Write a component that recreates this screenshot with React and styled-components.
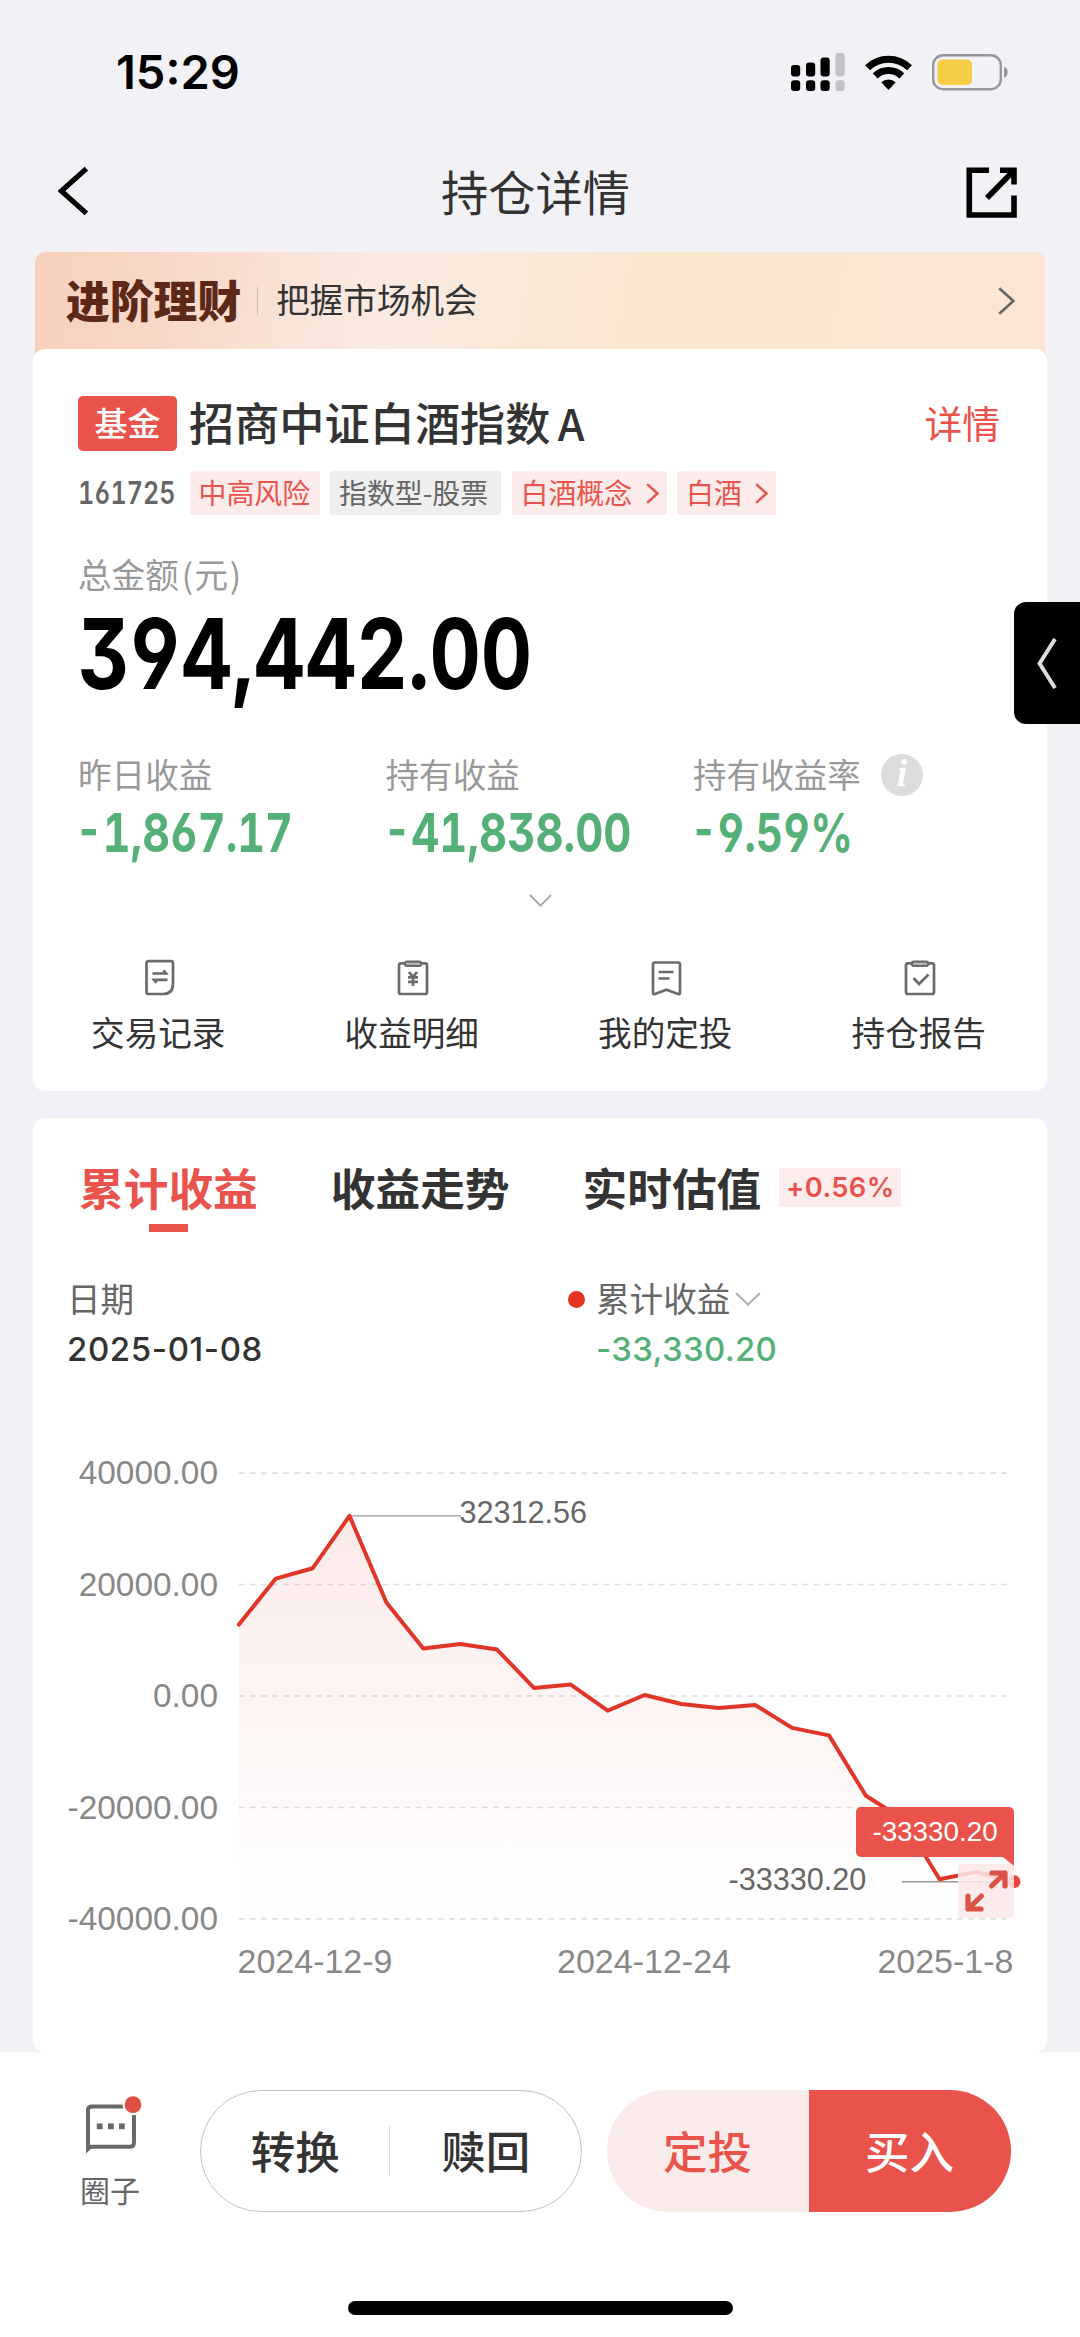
import React from "react";
import styled, { createGlobalStyle } from "styled-components";

const RED = "#e9534c";
const GREEN = "#55b078";
const CJK = `"Noto Sans CJK SC", "Noto Sans", sans-serif`;
const LATIN = `Inter, "Noto Sans CJK SC", sans-serif`;
const AXIS = `"Liberation Sans", "Noto Sans CJK SC", sans-serif`;

const GlobalStyle = createGlobalStyle`
  * { box-sizing: border-box; }
  body { margin: 0; background: #f2f1f6; font-family: ${CJK}; color: #333; }
  svg { display: block; flex: none; }
`;

const Screen = styled.div`
  position: relative;
  width: 1080px;
  height: 2337px;
  overflow: hidden;
  display: flex;
  flex-direction: column;
  white-space: nowrap;
`;

const StatusBar = styled.header`
  height: 144px;
  padding: 0 71px 0 116px;
  display: flex;
  align-items: center;
  justify-content: space-between;
`;

const Clock = styled.span`
  font: 600 47px/48px ${LATIN};
  color: #000;
`;

const StatusIcons = styled.div`
  display: flex;
  align-items: center;
  gap: 20px;
`;

const NavBar = styled.nav`
  height: 97px;
  margin-bottom: 11px;
  padding: 0 62px 0 58px;
  display: grid;
  grid-template-columns: 52px 1fr 52px;
  align-items: center;
`;

const BackLink = styled.a`
  padding-bottom: 3px;
`;

const NavTitle = styled.h1`
  margin: 0;
  padding: 0 5px 4px 0;
  text-align: center;
  font: 400 47.2px/60px ${CJK};
`;

const Banner = styled.section`
  height: 108px;
  margin: 0 34px -11px 35px;
  padding: 0 31px 11px;
  border-radius: 11px 11px 0 0;
  background: linear-gradient(100deg, #f7d0bc 0%, #f8d8c8 14%, #faeae2 34%, #fae8d8 48%, #fae5cf 60%, #fae6d3 100%);
  display: flex;
  align-items: center;
`;

const BannerBrand = styled.strong`
  padding-bottom: 4px;
  font: 900 43.8px/60px ${CJK};
  color: #5c2817;
`;

const BannerRule = styled.i`
  width: 1px;
  height: 28px;
  margin: 0 18px 0 16px;
  background: #d5b9aa;
`;

const BannerText = styled.span`
  flex: 1;
  padding-bottom: 3px;
  font: 400 33.6px/50px ${CJK};
`;

const Card = styled.section`
  position: relative;
  width: 1014px;
  height: ${(p) => p.$height}px;
  margin: 0 33px ${(p) => p.$gap || 0}px;
  border-radius: 12px;
  background: #fff;
`;

const FundHeader = styled.div`
  height: 102px;
  padding: 47px 47px 0 45px;
  display: flex;
  align-items: flex-start;
`;

const FundBadge = styled.span`
  width: 99px;
  height: 55px;
  margin-right: 12px;
  border-radius: 5px;
  background: ${RED};
  color: #fff;
  text-align: center;
  font: 500 33px/52px ${CJK};
`;

const FundName = styled.h2`
  flex: 1;
  margin: 0;
  font: 500 45.2px/51px ${CJK};
`;

const NameClass = styled.span`
  font-size: 43px;
  margin-left: -3px;
`;

const DetailLink = styled.a`
  font: 400 37.8px/51px ${CJK};
  color: ${RED};
`;

const TagRow = styled.div`
  height: 44px;
  margin: 20px 0 0 45px;
  display: flex;
  align-items: center;
  gap: 10.5px;
`;

const FundCode = styled.span`
  width: 101px;
  font: 600 31px/46px ${LATIN};
  font-feature-settings: "cv03", "cv04", "tnum";
  color: #666;
`;

const CodeText = styled.span`
  display: inline-block;
  transform: scaleX(0.81);
  transform-origin: left;
`;

const Tag = styled.span`
  width: ${(p) => p.$width}px;
  height: 44px;
  padding: 0 8px 0 9px;
  border-radius: 3px;
  display: flex;
  align-items: center;
  justify-content: space-between;
  background: ${(p) => (p.$muted ? "#eeeeee" : "#fbebea")};
  color: ${(p) => (p.$muted ? "#666" : RED)};
  font: 400 27.9px/44px ${CJK};
`;

const TagText = styled.span`
  height: 44px;
  line-height: 43px;
`;

const Caption = styled.div`
  height: 40px;
  margin: 40px 0 0 45px;
  color: #999;
  font: 400 33.6px/37px ${CJK};
`;

const Unit = styled.span`
  margin-left: 3px;
  letter-spacing: 1.5px;
`;

const Numeral = styled.div`
  height: ${(p) => p.$box}px;
  margin-left: ${(p) => p.$shift || 0}px;
  font: ${(p) => p.$weight} ${(p) => p.$size}px/${(p) => p.$box}px ${LATIN};
  font-feature-settings: "cv03", "cv04", "cv09", "tnum";
  color: ${(p) => p.$color};
  transform: scaleX(${(p) => p.$squeeze});
  transform-origin: left;
`;

const AmountRow = styled.div`
  margin: 14px 0 56px 45px;
`;

const Stats = styled.div`
  margin-left: 45px;
  display: grid;
  grid-template-columns: repeat(3, 307.5px);
`;

const StatLabel = styled.div`
  height: 42px;
  margin-bottom: 11px;
  display: flex;
  gap: 20px;
  color: #999;
  font: 400 33.6px/39px ${CJK};
`;

const InfoDot = styled.i`
  width: 42px;
  height: 42px;
  border-radius: 50%;
  background: #dcdcdc;
  color: #fff;
  text-align: center;
  font: italic 700 37px/40px "Liberation Serif", serif;
`;

const Expander = styled.div`
  height: 20px;
  margin: 31px 0 49px;
  display: flex;
  align-items: center;
  justify-content: center;
`;

const Actions = styled.div`
  display: grid;
  grid-template-columns: repeat(4, 1fr);
`;

const Action = styled.a`
  display: flex;
  flex-direction: column;
  align-items: center;
  gap: 16px;
  font: 400 33.6px/40px ${CJK};
`;

const ActionLabel = styled.span`
  padding-right: 3px;
`;

const Tabs = styled.div`
  height: 114px;
  padding: 45px 0 0 46px;
  display: flex;
  gap: 73px;
`;

const Tab = styled.div`
  display: flex;
  flex-direction: column;
  align-items: center;
  gap: 11px;
  color: ${(p) => (p.$active ? RED : "#333")};
  font: 700 44.7px/47px ${CJK};
`;

const TabBar = styled.i`
  width: 39px;
  height: 8px;
  background: ${RED};
`;

const TabLabel = styled.span`
  display: flex;
  height: 50px;
`;

const ChangeBadge = styled.span`
  width: 122px;
  height: 39px;
  margin: 5px 0 0 18px;
  background: #fdecec;
  text-align: center;
  color: ${RED};
  font: 600 27.3px/40px ${LATIN};
  letter-spacing: 0.4px;
`;

const Legend = styled.div`
  margin: 47px 0 81px 34px;
  display: grid;
  grid-template-columns: 501px 1fr;
`;

const LegendItem = styled.div`
  padding-left: ${(p) => (p.$dotted ? 28 : 0)}px;
  display: flex;
  flex-direction: column;
  gap: 10px;
`;

const LegendLabel = styled.div`
  height: 40px;
  margin-left: ${(p) => (p.$dotted ? -28 : 0)}px;
  display: flex;
  align-items: center;
  color: #666;
  font: 400 33.6px/40px ${CJK};
`;

const LegendText = styled.span`
  padding-bottom: 3px;
  margin-right: 5px;
`;

const SeriesDot = styled.i`
  width: 17px;
  height: 17px;
  margin-right: 11px;
  border-radius: 50%;
  background: #e63422;
`;

const LegendValue = styled.div`
  height: 40px;
  color: ${(p) => p.$color};
  font: 500 33px/40px ${LATIN};
  letter-spacing: ${(p) => p.$track}px;
`;

const ChartBox = styled.div`
  position: relative;
  width: 1014px;
  height: 540px;
`;

const Callout = styled.div`
  position: absolute;
  left: 823px;
  top: 357px;
  width: 158px;
  height: 50px;
  border-radius: 5px 5px 0 5px;
  background: ${RED};
  color: #fff;
  text-align: center;
  font: 400 27.8px/49px ${AXIS};
  &::after {
    content: "";
    position: absolute;
    right: 0;
    top: 50px;
    border-top: 9px solid ${RED};
    border-left: 11px solid transparent;
  }
`;

const ZoomButton = styled.button`
  position: absolute;
  left: 925px;
  top: 414px;
  width: 56px;
  height: 54px;
  padding: 0;
  border: 0;
  border-radius: 4px;
  background: rgba(250, 232, 231, 0.88);
`;

const Footer = styled.footer`
  height: 285px;
  padding: 38px 69px 0 78px;
  background: #fff;
  display: flex;
  align-items: flex-start;
`;

const Circle = styled.a`
  width: 64px;
  margin-right: 58px;
  display: flex;
  flex-direction: column;
  align-items: center;
  gap: 15px;
  color: #666;
  font: 400 30px/40px ${CJK};
`;

const ButtonGroup = styled.div`
  width: ${(p) => p.$width}px;
  height: 122px;
  margin-right: ${(p) => p.$gap || 0}px;
  border: ${(p) => (p.$outlined ? "1px solid #c4c4c4" : "0")};
  border-radius: 61px;
  overflow: hidden;
  display: flex;
  align-items: center;
`;

const FooterButton = styled.button`
  flex: 1;
  height: 100%;
  padding: 0 1px 3px 0;
  border: 0;
  background: ${(p) => p.$fill || "transparent"};
  color: ${(p) => p.$color || "#333"};
  font: 500 44.5px/60px ${CJK};
`;

const GroupRule = styled.i`
  width: 1px;
  height: 50px;
  margin: 0 2px 0 -2px;
  background: #d8d8d8;
`;

const HomeIndicator = styled.div`
  position: absolute;
  left: 348px;
  bottom: 22px;
  width: 385px;
  height: 14px;
  border-radius: 7px;
  background: #000;
`;

const SideTab = styled.div`
  position: absolute;
  right: 0;
  top: 602px;
  width: 66px;
  height: 122px;
  padding-left: 23px;
  border-radius: 12px 0 0 12px;
  background: #000;
  display: flex;
  align-items: center;
`;

function Chevron({ w, h, dir, color, stroke }) {
  const s = stroke / 2;
  const d = {
    left: `M${w - s} ${s} L${s * 1.3} ${h / 2} L${w - s} ${h - s}`,
    right: `M${s} ${s} L${w - s * 1.3} ${h / 2} L${s} ${h - s}`,
    down: `M${s} ${s} L${w / 2} ${h - s * 1.3} L${w - s} ${s}`,
  }[dir];
  return (
    <svg width={w} height={h} fill="none" stroke={color} strokeWidth={stroke}>
      <path d={d} />
    </svg>
  );
}

function SignalIcon() {
  const bars = [
    [0, 12, 11.5],
    [15, 9.5, 14],
    [29.5, 4.5, 19],
    [44.5, 0, 23.5],
  ];
  return (
    <svg width="54" height="38">
      {bars.map(([x, y, h], i) => (
        <g key={x} fill={i === 3 ? "#c3c2c7" : "#000"}>
          <rect x={x} y={y} width="9.2" height={h} rx="3" />
          <rect x={x} y="27.3" width="9.2" height="10.7" rx="3" />
        </g>
      ))}
    </svg>
  );
}

function WifiIcon() {
  return (
    <svg width="47" height="35" fill="none" stroke="#000" strokeWidth="7">
      <path d="M2.5 12.8 A30 30 0 0 1 44.5 12.8" />
      <path d="M10.2 21 A19 19 0 0 1 36.8 21" />
      <path d="M23.5 35 L16.3 27.3 A10.5 10.5 0 0 1 30.7 27.3 Z" fill="#000" stroke="none" />
    </svg>
  );
}

function BatteryIcon() {
  return (
    <svg width="77" height="37">
      <rect x="1.2" y="1.2" width="67.6" height="34" rx="10" fill="none" stroke="#97969b" strokeWidth="2.4" />
      <rect x="5.5" y="5.5" width="34.5" height="25.5" rx="5" fill="#f6ce46" />
      <path d="M72 12.5 C77 14.5 77 22 72 24 Z" fill="#97969b" />
    </svg>
  );
}

function ShareIcon() {
  return (
    <svg width="52" height="52" fill="none" stroke="#000" strokeWidth="5.6">
      <path d="M23 3.3 H3.3 V48 H48 V28.5" />
      <path d="M34 3.3 H48 V17.5" />
      <path d="M47 4.5 L21 31" />
    </svg>
  );
}

const iconProps = { width: 32, height: 37, fill: "none", stroke: "#6b6b6b", strokeWidth: 2.7 };

function RecordIcon() {
  return (
    <svg {...iconProps}>
      <path d="M4.5 2.2 H27 Q29 2.2 29 4.2 V25 Q29 35 19 35 H4.5 Q2.5 35 2.5 33 V4.2 Q2.5 2.2 4.5 2.2 Z" />
      <path d="M8.5 14.5 H22 L19.5 11.4" />
      <path d="M23.5 20.8 H10 L12.5 23.9" />
    </svg>
  );
}

function ClipboardIcon({ children }) {
  return (
    <svg {...iconProps}>
      <path d="M8 4.4 H4 Q2 4.4 2 6.4 V33 Q2 35 4 35 H28 Q30 35 30 33 V6.4 Q30 4.4 28 4.4 H24" />
      <rect x="8" y="2.6" width="16" height="4.2" rx="1.6" fill="#bdbdbd" strokeWidth="2.2" />
      {children}
    </svg>
  );
}

function PlanIcon() {
  return (
    <svg {...iconProps}>
      <path d="M4 3.5 H27 Q29 3.5 29 5.5 V34 Q29 35.5 27 35 L15.5 30.8 L4 35 Q2 35.5 2 34 V5.5 Q2 3.5 4 3.5 Z" />
      <path d="M7.5 13 H22.5 M7.5 19.5 H18.5" />
    </svg>
  );
}

function ChatIcon() {
  return (
    <svg width="64" height="64" overflow="visible">
      <path d="M56 25 V52.5 Q56 56.7 52 56.7 H10 V20 Q10 16.5 14 16.5 H46" fill="none" stroke="#696969" strokeWidth="4" />
      <path d="M8 55 V63.5 L15 57 Z" fill="#696969" />
      <g fill="#696969">
        <rect x="18.8" y="33.4" width="5.8" height="5.8" />
        <rect x="30" y="33.4" width="5.8" height="5.8" />
        <rect x="41" y="33.4" width="5.8" height="5.8" />
      </g>
      <circle cx="55" cy="14.7" r="10.5" fill="#fff" />
      <circle cx="55" cy="14.7" r="8.4" fill="#dc4f42" />
    </svg>
  );
}

const series = [
  12820, 21070, 22940, 32312.56, 16780, 8510, 9335, 8330, 1450, 2050, -2640, 180, -1440, -2140, -1620,
  -5730, -7070, -17900, -22080, -32900, -31560, -33330.2,
];
const px = (i) => 205.9 + i * 36.88;
const py = (v) => 246 - (v / 20000) * 111.45;

function ProfitChart() {
  const line = series.map((v, i) => `${px(i).toFixed(1)},${py(v).toFixed(1)}`).join(" ");
  const end = series.length - 1;
  return (
    <svg width="1014" height="540" fontFamily={AXIS}>
      <defs>
        <linearGradient id="fade" x1="0" y1="66" x2="0" y2="469" gradientUnits="userSpaceOnUse">
          <stop offset="0" stopColor="#d8402f" stopOpacity="0.105" />
          <stop offset="0.9" stopColor="#d8402f" stopOpacity="0.008" />
          <stop offset="1" stopColor="#d8402f" stopOpacity="0" />
        </linearGradient>
      </defs>
      {[40000, 20000, 0, -20000, -40000].map((v) => (
        <g key={v}>
          <line x1="206" x2="979" y1={py(v)} y2={py(v)} stroke="#dedede" strokeWidth="1.6" strokeDasharray="5.6 5.45" />
          <text x="185" y={py(v) + 11.3} fontSize="33.4" fill="#888" textAnchor="end">
            {v.toFixed(2)}
          </text>
        </g>
      ))}
      <polygon points={`${px(0)},469 ${line} ${px(end)},469`} fill="url(#fade)" />
      <line x1={px(3)} x2="428" y1={py(32312.56)} y2={py(32312.56)} stroke="#b5b5b5" strokeWidth="1.8" />
      <line x1="869" x2={px(end)} y1={py(-33330.2)} y2={py(-33330.2)} stroke="#999" strokeWidth="1.4" />
      <polyline points={line} fill="none" stroke="#e0362a" strokeWidth="4" strokeLinejoin="round" strokeLinecap="round" />
      <circle cx="981" cy={py(-33330.2)} r="6.5" fill="#e9453d" />
      <g fontSize="30.6" fill="#666">
        <text x="426.5" y="73">32312.56</text>
        <text x="695.5" y="439.5">-33330.20</text>
      </g>
      <g fontSize="34" fill="#888">
        <text x="204.5" y="523">2024-12-9</text>
        <text x="611" y="523" textAnchor="middle">2024-12-24</text>
        <text x="980.5" y="523" textAnchor="end">2025-1-8</text>
      </g>
    </svg>
  );
}

const stats = [
  { label: "昨日收益", value: "-1,867.17", squeeze: 0.797 },
  { label: "持有收益", value: "-41,838.00", squeeze: 0.806 },
  { label: "持有收益率", value: "-9.59%", squeeze: 0.78, info: true },
];

const actions = [
  { label: "交易记录", icon: <RecordIcon /> },
  {
    label: "收益明细",
    icon: (
      <ClipboardIcon>
        <path d="M12 13 L16 18 L20 13 M16 18 V27 M11 18.3 H21 M11 22.8 H21" />
      </ClipboardIcon>
    ),
  },
  { label: "我的定投", icon: <PlanIcon /> },
  {
    label: "持仓报告",
    icon: (
      <ClipboardIcon>
        <path d="M9.5 19 L15 25 L24.5 15.5" />
      </ClipboardIcon>
    ),
  },
];

export default function App() {
  return (
    <Screen>
      <GlobalStyle />
      <StatusBar>
        <Clock>15:29</Clock>
        <StatusIcons>
          <SignalIcon />
          <WifiIcon />
          <BatteryIcon />
        </StatusIcons>
      </StatusBar>
      <NavBar>
        <BackLink>
          <Chevron w={31} h={50} dir="left" color="#000" stroke={5.2} />
        </BackLink>
        <NavTitle>持仓详情</NavTitle>
        <ShareIcon />
      </NavBar>
      <Banner>
        <BannerBrand>进阶理财</BannerBrand>
        <BannerRule />
        <BannerText>把握市场机会</BannerText>
        <Chevron w={17} h={28} dir="right" color="#666" stroke={2.6} />
      </Banner>

      <Card $height={742} $gap={27}>
        <FundHeader>
          <FundBadge>基金</FundBadge>
          <FundName>
            招商中证白酒指数 <NameClass>A</NameClass>
          </FundName>
          <DetailLink>详情</DetailLink>
        </FundHeader>
        <TagRow>
          <FundCode>
            <CodeText>161725</CodeText>
          </FundCode>
          <Tag $width={130}>
            <TagText>中高风险</TagText>
          </Tag>
          <Tag $width={171} $muted>
            <TagText>指数型-股票</TagText>
          </Tag>
          <Tag $width={155}>
            <TagText>白酒概念</TagText>
            <Chevron w={13} h={21} dir="right" color={RED} stroke={2.4} />
          </Tag>
          <Tag $width={99}>
            <TagText>白酒</TagText>
            <Chevron w={13} h={21} dir="right" color={RED} stroke={2.4} />
          </Tag>
        </TagRow>
        <Caption>
          总金额<Unit>(元)</Unit>
        </Caption>
        <AmountRow>
          <Numeral $size={98} $box={89} $weight={700} $color="#000" $squeeze={0.812}>
            394,442.00
          </Numeral>
        </AmountRow>
        <Stats>
          {stats.map((s) => (
            <div key={s.label}>
              <StatLabel>
                {s.label}
                {s.info && <InfoDot>i</InfoDot>}
              </StatLabel>
              <Numeral $size={54} $box={52} $shift={-3} $weight={700} $color={GREEN} $squeeze={s.squeeze}>
                {s.value}
              </Numeral>
            </div>
          ))}
        </Stats>
        <Expander>
          <Chevron w={23} h={13} dir="down" color="#aaa" stroke={2} />
        </Expander>
        <Actions>
          {actions.map((a) => (
            <Action key={a.label}>
              {a.icon}
              <ActionLabel>{a.label}</ActionLabel>
            </Action>
          ))}
        </Actions>
      </Card>

      <Card $height={934}>
        <Tabs>
          <Tab $active>
            <TabLabel>累计收益</TabLabel>
            <TabBar />
          </Tab>
          <Tab>
            <TabLabel>收益走势</TabLabel>
          </Tab>
          <Tab>
            <TabLabel>
              实时估值
              <ChangeBadge>+0.56%</ChangeBadge>
            </TabLabel>
          </Tab>
        </Tabs>
        <Legend>
          <LegendItem>
            <LegendLabel>
              <LegendText>日期</LegendText>
            </LegendLabel>
            <LegendValue $color="#333" $track={0.6}>2025-01-08</LegendValue>
          </LegendItem>
          <LegendItem $dotted>
            <LegendLabel $dotted>
              <SeriesDot />
              <LegendText>累计收益</LegendText>
              <Chevron w={26} h={14} dir="down" color="#b5b5b5" stroke={2.2} />
            </LegendLabel>
            <LegendValue $color={GREEN} $track={0.3}>-33,330.20</LegendValue>
          </LegendItem>
        </Legend>
        <ChartBox>
          <ProfitChart />
          <Callout>-33330.20</Callout>
          <ZoomButton aria-label="全屏">
            <svg width="56" height="54" fill="none" stroke="#dc5245" strokeWidth="5.2" strokeLinecap="round" strokeLinejoin="round">
              <path d="M34 9 H47 V22 M47 9 L33.5 22" />
              <path d="M10 32 V45 H23 M10 45 L23.5 32" />
            </svg>
          </ZoomButton>
        </ChartBox>
      </Card>

      <Footer>
        <Circle>
          <ChatIcon />
          圈子
        </Circle>
        <ButtonGroup $width={382} $gap={25} $outlined>
          <FooterButton>转换</FooterButton>
          <GroupRule />
          <FooterButton>赎回</FooterButton>
        </ButtonGroup>
        <ButtonGroup $width={404}>
          <FooterButton $fill="#f9ebe9" $color={RED}>定投</FooterButton>
          <FooterButton $fill={RED} $color="#fff">买入</FooterButton>
        </ButtonGroup>
      </Footer>
      <HomeIndicator />
      <SideTab>
        <Chevron w={20} h={53} dir="left" color="#ddd" stroke={4} />
      </SideTab>
    </Screen>
  );
}
